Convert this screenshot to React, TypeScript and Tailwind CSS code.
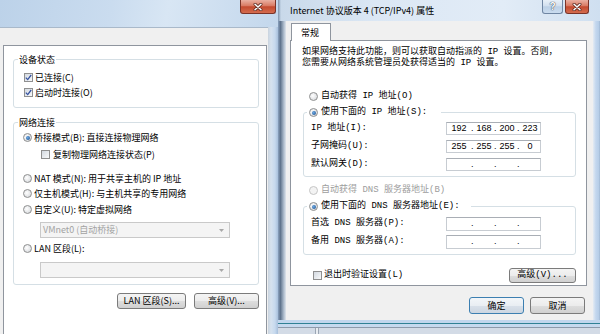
import React from "react";

const LF = "font-['Noto_Sans_CJK_SC','Noto_Sans',sans-serif] text-[9px] text-black";
const RF = "font-['Liberation_Mono','Noto_Sans_CJK_SC',monospace] text-[9px] text-black";

function Check({ checked = false }: { checked?: boolean }) {
  return (
    <span className="flex h-[9px] w-[9px] shrink-0 items-center justify-center border border-[#8f8f8f] bg-[linear-gradient(135deg,#d3d9e0,#f8f9fa)]">
      {checked && (
        <svg width="7" height="7" viewBox="0 0 7 7">
          <path d="M0.8 3.6 L2.7 5.6 L6.2 1" stroke="#3552a0" strokeWidth="1.3" fill="none" />
        </svg>
      )}
    </span>
  );
}

function Radio({ checked = false, disabled = false }: { checked?: boolean; disabled?: boolean }) {
  return (
    <span
      className={
        disabled
          ? "flex h-[9px] w-[9px] shrink-0 items-center justify-center rounded-full border border-[#c6c6c6] bg-[#f3f3f3]"
          : "flex h-[9px] w-[9px] shrink-0 items-center justify-center rounded-full border border-[#8e8f8f] bg-[radial-gradient(circle_at_40%_40%,#ffffff,#d0d3d7)]"
      }
    >
      {checked && <span className="h-[4px] w-[4px] rounded-full bg-[radial-gradient(circle_at_40%_40%,#6aa8e4,#184a86)]" />}
    </span>
  );
}

function Btn({ children, className, def = false }: { children: React.ReactNode; className: string; def?: boolean }) {
  return (
    <div
      className={
        (def
          ? "border-[#3c7fb1] bg-[linear-gradient(#f3f6f9,#e9eef3_50%,#d9e1ea_51%,#ccd6e1)] "
          : "border-[#7b7b7b] bg-[linear-gradient(#f4f4f4,#ececec_50%,#dedede_51%,#d0d0d0)] ") +
        "flex items-center justify-center rounded-[3px] border " +
        className
      }
    >
      {children}
    </div>
  );
}

function CloseBtn({ className }: { className: string }) {
  return (
    <div
      className={
        "flex items-center justify-center rounded-b-[3px] border border-t-0 border-[#7a3328] bg-[linear-gradient(#eab0a2,#d97a63_45%,#c44a2f_52%,#d46c4f)] " +
        className
      }
    >
      <svg width="10" height="8" viewBox="0 0 10 8">
        <path d="M2 1.2 L8 6.8 M8 1.2 L2 6.8" stroke="#5e2b22" strokeWidth="3" strokeLinecap="round" />
        <path d="M2 1.2 L8 6.8 M8 1.2 L2 6.8" stroke="#ffffff" strokeWidth="1.5" strokeLinecap="round" />
      </svg>
    </div>
  );
}

function Arrow() {
  return (
    <svg width="5" height="3" viewBox="0 0 5 3">
      <path d="M0 0 H5 L2.5 3 Z" fill="#a8a8a8" />
    </svg>
  );
}

function IpBox({ v }: { v?: string[] }) {
  return (
    <div className="flex h-full w-[95px] items-center border border-[#c7ccd2] border-t-[#a9aeb5] bg-white font-['Liberation_Sans',sans-serif] text-[9px] text-black">
      <span className="w-[24px] text-center">{v ? v[0] : ""}</span>
      {[1, 2, 3].map((i) => (
        <span key={i} className="flex w-[23px]">
          <span className="w-[3px]">.</span>
          <span className="flex-1 text-center">{v ? v[i] : ""}</span>
        </span>
      ))}
    </div>
  );
}

function LeftWindow() {
  return (
    <div className={"flex w-[278px] shrink-0 flex-col " + LF}>
      <div className="flex h-[27px] shrink-0 justify-end bg-[linear-gradient(100deg,#bcd2e9_0%,#cadcef_40%,#d8e6f4_60%,#c3d7ec_100%)] pr-[2px]">
        <CloseBtn className="h-[14px] w-[36px]" />
      </div>
      <div className="flex min-h-0 flex-1">
        <div className="flex w-[268px] flex-col border-t border-[#a9b9ca] bg-[#f0f0f0] pl-[3px] pr-[1px] pt-[17px]">
          <div className="flex-1 border border-b-0 border-[#8f959e] bg-white pl-[9px]">
            <div className="w-[246px]">
              <fieldset className="mt-[7px] rounded-[3px] border border-[#d5dfe5]">
                <legend className="ml-[4px] h-[13px] px-[1px] leading-[13px]">设备状态</legend>
                <div className="mt-[4px] pb-[7px]">
                  <div className="flex h-[15px] items-center gap-[2px] pl-[10px]">
                    <Check checked />
                    <span>已连接(C)</span>
                  </div>
                  <div className="flex h-[15px] items-center gap-[2px] pl-[10px]">
                    <Check checked />
                    <span>启动时连接(O)</span>
                  </div>
                </div>
              </fieldset>
              <fieldset className="mt-[8px] rounded-[3px] border border-[#d5dfe5]">
                <legend className="ml-[4px] h-[13px] px-[1px] leading-[13px]">网络连接</legend>
                <div className="pb-[6px]">
                  <div className="mt-[1px] flex h-[15px] items-center gap-[2px] pl-[9px]">
                    <Radio checked />
                    <span>桥接模式(B): 直接连接物理网络</span>
                  </div>
                  <div className="mt-[2px] flex h-[15px] items-center gap-[3px] pl-[27px]">
                    <Check />
                    <span>复制物理网络连接状态(P)</span>
                  </div>
                  <div className="mt-[9px] flex h-[15px] items-center gap-[2px] pl-[9px]">
                    <Radio />
                    <span>NAT 模式(N): 用于共享主机的 IP 地址</span>
                  </div>
                  <div className="flex h-[15px] items-center gap-[2px] pl-[9px]">
                    <Radio />
                    <span>仅主机模式(H): 与主机共享的专用网络</span>
                  </div>
                  <div className="mt-[1px] flex h-[15px] items-center gap-[2px] pl-[9px]">
                    <Radio />
                    <span>自定义(U): 特定虚拟网络</span>
                  </div>
                  <div className="ml-[26px] mt-[5px] flex h-[16px] w-[190px] items-center justify-between border border-[#c9c9c9] bg-[#f4f4f4] pl-[2px] pr-[5px] text-[#a3a3a3]">
                    <span>VMnet0 (自动桥接)</span>
                    <Arrow />
                  </div>
                  <div className="mt-[3px] flex h-[15px] items-center gap-[2px] pl-[9px]">
                    <Radio />
                    <span>LAN 区段(L):</span>
                  </div>
                  <div className="ml-[26px] mt-[6px] flex h-[16px] w-[190px] items-center justify-end border border-[#c9c9c9] bg-[#f4f4f4] pr-[5px]">
                    <Arrow />
                  </div>
                </div>
              </fieldset>
              <div className="mt-[8px] flex justify-end gap-[8px]">
                <Btn className="h-[16px] w-[69px]">LAN 区段(S)...</Btn>
                <Btn className="h-[16px] w-[65px]">高级(V)...</Btn>
              </div>
            </div>
          </div>
        </div>
        <div className="w-[10px] bg-[linear-gradient(90deg,#c9d3de,#d6e2ef_30%,#c6d9ee_70%,#a7bfdb)]" />
      </div>
    </div>
  );
}

function RightWindow() {
  return (
    <div className="flex w-[322px] shrink-0 flex-col">
      <div className="flex h-[21px] shrink-0 items-start bg-[linear-gradient(90deg,#7f94ad_0px,#c9d9ea_3px,#dbe7f4_30%,#e2ecf7_70%,#cfdff0)]">
        <div className="flex h-[21px] flex-1 items-center whitespace-nowrap pl-[12px] font-['Noto_Sans_CJK_SC','Noto_Sans',sans-serif] text-[9px] text-black">
          Internet 协议版本 4 (TCP/IPv4) 属性
        </div>
        <div className="flex gap-[2px] pr-[11px]">
          <div className="flex h-[14px] w-[21px] items-center justify-center rounded-b-[3px] border border-t-0 border-[#6f86a3] bg-[linear-gradient(#e8f0f8,#d2e0ef_45%,#bcd0e6_52%,#cadcef)] font-['Liberation_Sans',sans-serif] text-[10px] font-bold leading-none text-white [text-shadow:0_0_1px_#2d3b4c,0_0_1px_#2d3b4c]">
            ?
          </div>
          <CloseBtn className="h-[14px] w-[24px]" />
        </div>
      </div>
      <div className="flex h-[299px] shrink-0">
        <div className="w-[8px] bg-[linear-gradient(90deg,#8aa2c0,#5f738c_30%,#a9b8c9_70%,#dfe5ec)]" />
        <div className={"flex w-[307px] flex-col bg-[#f0f0f0] " + RF}>
          <div className="relative z-10 -mb-px ml-[5px] mt-[2px] flex h-[18px] w-[40px] items-center border border-b-0 border-[#8f959e] bg-white pl-[9px] font-['Noto_Sans_CJK_SC',sans-serif]">
            常规
          </div>
          <div className="ml-[4px] h-[246px] w-[297px] border border-[#8f959e] bg-white">
            <div className="mt-[6px] whitespace-nowrap pl-[11px] leading-[11px]">
              如果网络支持此功能，则可以获取自动指派的 IP 设置。否则，
              <br />
              您需要从网络系统管理员处获得适当的 IP 设置。
            </div>
            <div className="mt-[21px] flex h-[13px] items-center gap-[3px] pl-[18px]">
              <Radio />
              <span>自动获得 IP 地址(O)</span>
            </div>
            <fieldset className="ml-[12px] mt-[3px] w-[273px] rounded-[3px] border border-[#d5dfe5]">
              <legend className="ml-[3px] h-[13px] w-[134px] pl-[2px]">
                <span className="flex h-[13px] items-center gap-[3px] whitespace-nowrap">
                  <Radio checked />
                  <span>使用下面的 IP 地址(S):</span>
                </span>
              </legend>
              <div className="mt-[3px] flex flex-col gap-[5px] pb-[5px] pl-[7px] pr-[34px]">
                <div className="flex h-[13px] items-center justify-between">
                  <span>IP 地址(I):</span>
                  <IpBox v={["192", "168", "200", "223"]} />
                </div>
                <div className="flex h-[13px] items-center justify-between">
                  <span>子网掩码(U):</span>
                  <IpBox v={["255", "255", "255", "0"]} />
                </div>
                <div className="flex h-[13px] items-center justify-between">
                  <span>默认网关(D):</span>
                  <IpBox />
                </div>
              </div>
            </fieldset>
            <div className="mt-[7px] flex h-[13px] items-center gap-[3px] pl-[18px] text-[#9d9d9d]">
              <Radio disabled />
              <span>自动获得 DNS 服务器地址(B)</span>
            </div>
            <fieldset className="ml-[12px] mt-[3px] w-[273px] rounded-[3px] border border-[#d5dfe5]">
              <legend className="ml-[3px] h-[13px] w-[164px] pl-[2px]">
                <span className="flex h-[13px] items-center gap-[3px] whitespace-nowrap">
                  <Radio checked />
                  <span>使用下面的 DNS 服务器地址(E):</span>
                </span>
              </legend>
              <div className="mt-[4px] flex flex-col gap-[4px] pb-[5px] pl-[7px] pr-[34px]">
                <div className="flex h-[14px] items-center justify-between">
                  <span>首选 DNS 服务器(P):</span>
                  <IpBox />
                </div>
                <div className="flex h-[14px] items-center justify-between">
                  <span>备用 DNS 服务器(A):</span>
                  <IpBox />
                </div>
              </div>
            </fieldset>
            <div className="mt-[13px] flex h-[15px] items-center justify-between pl-[22px] pr-[10px]">
              <div className="flex items-center gap-[2px]">
                <Check />
                <span>退出时验证设置(L)</span>
              </div>
              <Btn className="h-[15px] w-[67px]">高级(V)...</Btn>
            </div>
          </div>
          <div className="mt-[11px] flex justify-end gap-[6px] pr-[8px] font-['Noto_Sans_CJK_SC',sans-serif]">
            <Btn def className="h-[17px] w-[55px]">
              确定
            </Btn>
            <Btn className="h-[17px] w-[55px]">取消</Btn>
          </div>
        </div>
        <div className="w-[7px] bg-[linear-gradient(90deg,#e4ebf3,#c3d7ee_40%,#b7cee8_80%,#9fb7d3)]" />
      </div>
      <div className="flex h-[14px] shrink-0 flex-col">
        <div className="h-[3px] bg-[#c1d6ed]" />
        <div className="h-[1px] bg-[#2f8194]" />
        <div className="h-[3px] bg-[#c6d9ee]" />
        <div className="h-[1px] bg-[#8c9aab]" />
        <div className="flex flex-1 bg-[#d3dbe6]">
          <div className="ml-[37px] h-full w-[4px] border-x border-[#9aa5b3] bg-[#e8ecf1]" />
        </div>
      </div>
    </div>
  );
}

export default function App() {
  return (
    <div className="flex h-[334px] w-[600px] overflow-hidden bg-[#c9daed]">
      <LeftWindow />
      <RightWindow />
    </div>
  );
}
